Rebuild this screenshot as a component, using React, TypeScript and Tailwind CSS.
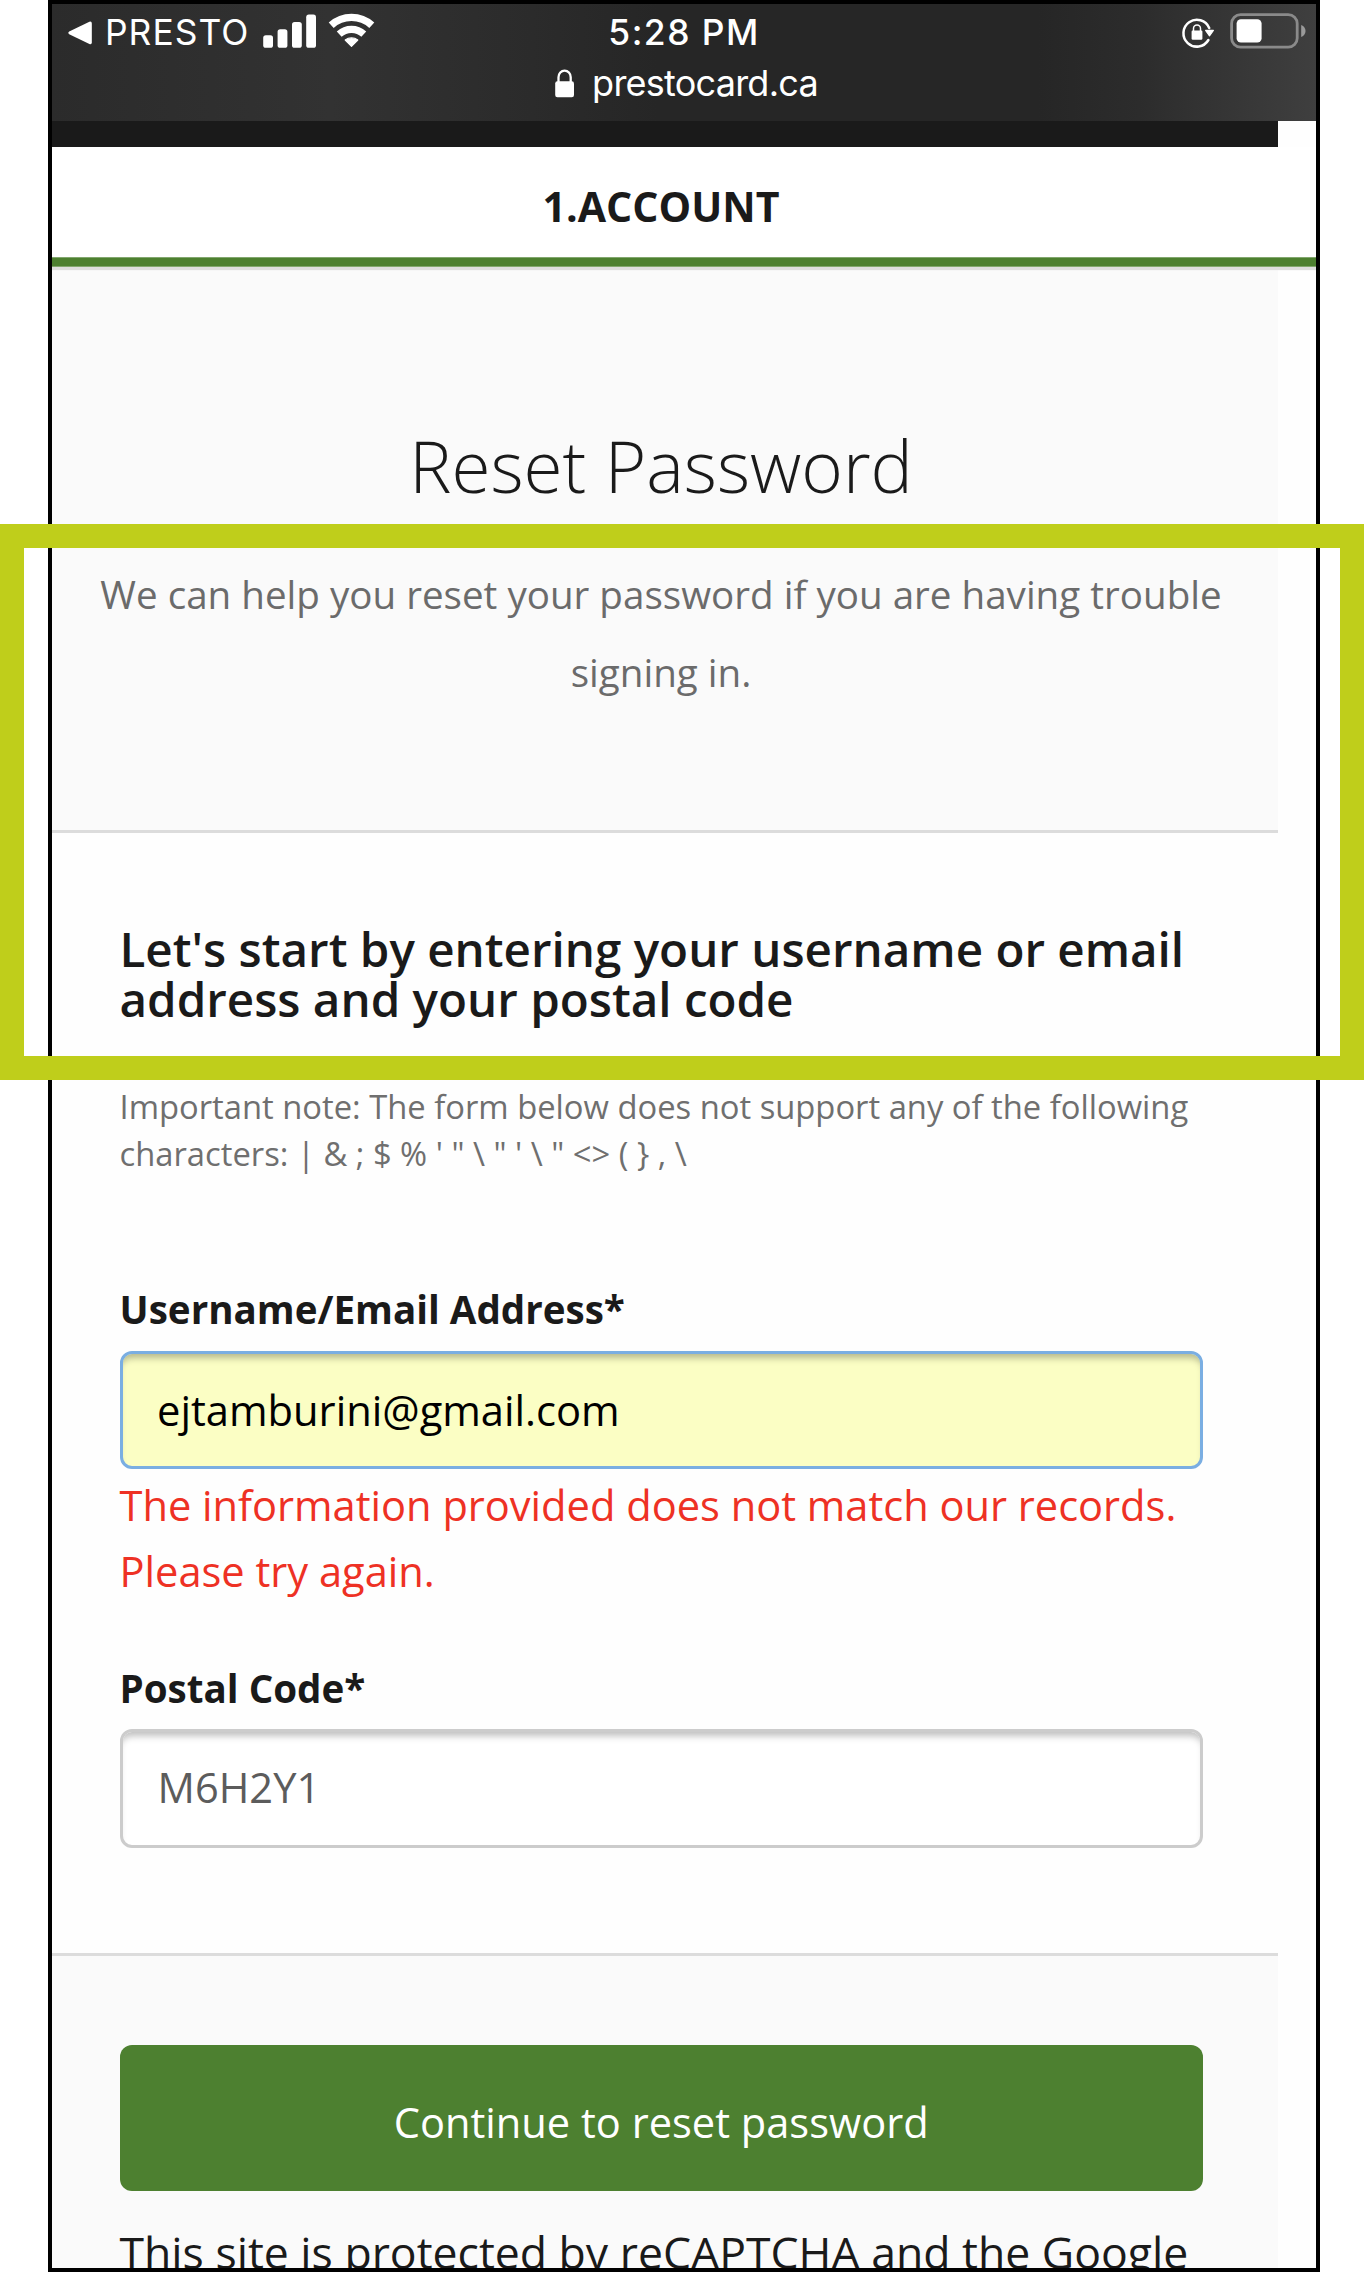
import type { ReactNode } from "react";

function SignalBars() {
  return (
    <svg width="54" height="34" viewBox="0 0 54 34" fill="#fff">
      <rect x="0.2" y="21.3" width="9.8" height="12.5" rx="2.6" />
      <rect x="14.6" y="15.2" width="9.8" height="18.6" rx="2.6" />
      <rect x="29" y="8" width="9.8" height="25.8" rx="2.6" />
      <rect x="43.2" y="0.6" width="9.8" height="33.2" rx="2.6" />
    </svg>
  );
}

function WifiIcon() {
  return (
    <svg width="47" height="35" viewBox="0 0 47 35" fill="none" stroke="#fff">
      <path d="M3.2 12.2 A30.3 30.3 0 0 1 43.8 12.2" strokeWidth="7.4" />
      <path d="M11.2 21.2 A18.3 18.3 0 0 1 35.8 21.2" strokeWidth="7.2" />
      <path d="M17.2 27 A10.6 10.6 0 0 1 29.8 27 L23.5 33.4 Z" fill="#fff" strokeWidth="1.2" strokeLinejoin="round" />
    </svg>
  );
}

function RotationLock() {
  return (
    <svg width="34" height="32" viewBox="0 0 34 32" fill="none">
      <path d="M27.4 23 A13.4 13.4 0 1 1 28.2 11" stroke="#fff" strokeWidth="2.5" strokeLinecap="round" />
      <path d="M24.6 13.4 H32.4 L28.5 18.8 Z" fill="#fff" stroke="#fff" strokeWidth="1.2" strokeLinejoin="round" />
      <rect x="10.6" y="13.6" width="10.8" height="9.2" rx="1.2" fill="#fff" />
      <path d="M12.5 14 V11.6 A3.5 3.5 0 0 1 19.5 11.6 V14" stroke="#fff" strokeWidth="1.5" />
    </svg>
  );
}

function Battery() {
  return (
    <svg width="77" height="36" viewBox="0 0 77 36" fill="none">
      <rect x="1.6" y="1.6" width="65.6" height="32.6" rx="9" stroke="#8a8a8a" strokeWidth="2.8" />
      <rect x="6.6" y="6.2" width="25" height="23.4" rx="4.4" fill="#fff" />
      <path d="M71.2 12 C77 14 77 22 71.2 24 Z" fill="#9a9a9a" />
    </svg>
  );
}

function Padlock() {
  return (
    <svg width="20" height="29" viewBox="0 0 20 29" fill="none">
      <rect x="0.2" y="12.2" width="18.8" height="16" rx="2.2" fill="#fff" />
      <path d="M3.5 13 V8.2 A6.1 6.6 0 0 1 15.7 8.2 V13" stroke="#fff" strokeWidth="2.3" />
    </svg>
  );
}

function BrowserHeader() {
  return (
    <header className="h-[117px] bg-[linear-gradient(90deg,#2b2b2b_0%,#323232_22%,#2b2b2b_38%,#262626_48%,#262626_78%,#2c2c2c_86%,#3f3f3f_100%)] pt-[5px] font-['Inter',sans-serif] text-white">
      <div className="grid h-12 grid-cols-[548px_168px_548px] text-[35.4px] leading-[48px]">
        <div className="flex items-start pl-4">
          <svg className="mt-[11.5px]" width="25" height="24" viewBox="0 0 25 24" fill="#fff">
            <path d="M1.2 10.4 L21.4 0.8 Q23.8 0 23.8 2.4 V21.4 Q23.8 23.8 21.4 22.9 L1.2 13.2 Q-0.6 11.8 1.2 10.4 Z" />
          </svg>
          <span className="ml-[12px] w-[158px] tracking-[1.02px]">PRESTO</span>
          <span className="mt-[4.5px]">
            <SignalBars />
          </span>
          <span className="ml-[10.5px] mt-[4px]">
            <WifiIcon />
          </span>
        </div>
        <div className="flex justify-center font-medium tracking-[1.45px]">
          <span className="whitespace-nowrap">5:28 PM</span>
        </div>
        <div className="flex items-start justify-end pr-[9px]">
          <span className="mr-[15px] mt-[8px]">
            <RotationLock />
          </span>
          <span className="mt-[4px]">
            <Battery />
          </span>
        </div>
      </div>
      <div className="mt-[2px] flex h-12 items-start justify-center pl-[5px] text-[36px] leading-[48px]">
        <span className="mt-[10px]">
          <Padlock />
        </span>
        <span className="ml-[17px] tracking-[-0.76px]">prestocard.ca</span>
      </div>
    </header>
  );
}

function FieldLabel({ children }: { children: ReactNode }) {
  return <div className="text-[38.6px] font-bold leading-[50px]">{children}</div>;
}

export default function App() {
  return (
    <div className="relative h-[2272px] w-[1364px] overflow-hidden bg-white pl-12 font-['Open_Sans',sans-serif] text-[#1a1a1a]">
      <main className="h-[2272px] w-[1272px] overflow-hidden border-4 border-black bg-[#fefefe]">
        <BrowserHeader />
        <div className="h-[26px] w-[1226px] bg-[#1a1a1a]" />
        <div className="h-[110px] bg-white pr-[46px] text-center text-[41.1px] font-bold leading-[119px]">1.ACCOUNT</div>
        <div className="relative h-[10px] border-y border-[#82a76e] bg-[#4d8030] shadow-[0_2px_1px_1px_#dedede]" />

        <section className="h-[565.5px] w-[1226px] border-b-[3px] border-[#dcdcdc] bg-[#fafafa] pr-[8px] pt-[148.5px] text-center">
          <h1 className="text-[71px] font-light leading-[100px]">Reset Password</h1>
          <p className="mt-[40.5px] whitespace-nowrap text-[38.6px] leading-[77.5px] text-[#6b6b6b]">
            We can help you reset your password if you are having trouble
            <br />
            signing in.
          </p>
        </section>

        <section className="h-[1123px] w-[1226px] border-b-[3px] border-[#dcdcdc] pl-[67.5px] pr-[75px] pt-[91px]">
          <h2 className="whitespace-nowrap text-[47.55px] font-semibold leading-[50.6px]">
            Let's start by entering your username or email
            <br />
            address and your postal code
          </h2>
          <p className="mt-[58.3px] whitespace-nowrap text-[32.75px] leading-[47.2px] text-[#6f6f6f]">
            Important note: The form below does not support any of the following
            <br />
            {"characters: | & ; $ % ' \" \\ \" ' \\ \" <> ( } , \\"}
          </p>

          <div className="mt-[106.9px]">
            <FieldLabel>Username/Email Address*</FieldLabel>
            <div className="mt-[17.2px] h-[118px] rounded-[12px] border-[3px] border-[#7aaee2] bg-[#fbfec4] pl-[34.5px] text-[41.7px] leading-[112px] text-black shadow-[inset_0_8px_7px_-4px_rgba(0,0,0,0.28)]">
              ejtamburini@gmail.com
            </div>
            <p className="mt-[2.7px] whitespace-nowrap text-[41.6px] leading-[66px] text-[#ee3124]">
              The information provided does not match our records.
              <br />
              Please try again.
            </p>
          </div>

          <div className="mt-[59px]">
            <FieldLabel>Postal Code*</FieldLabel>
            <div className="mt-[16px] h-[119px] rounded-[12px] border-[3px] border-[#cccccc] bg-white pl-[35px] text-[41.6px] leading-[111px] text-[#5c5c5c] shadow-[inset_0_8px_7px_-4px_rgba(0,0,0,0.25)]">
              M6H2Y1
            </div>
          </div>
        </section>

        <section className="h-[320px] w-[1226px] bg-[#fafafa] pl-[67.5px] pr-[75px] pt-[89.2px]">
          <button className="block h-[146.3px] w-full rounded-[12px] bg-[#4d8030] text-[41.6px] leading-none text-white">
            <span className="block h-[146px] leading-[155px]">Continue to reset password</span>
          </button>
          <p className="mt-[28px] whitespace-nowrap text-[44.55px] leading-[66px]">This site is protected by reCAPTCHA and the Google</p>
        </section>
      </main>

      {/* Highlight frame laid over the phone screen */}
      <div className="absolute left-0 top-[524px] h-[556px] w-[1364px] border-[24px] border-[#bfce1b]" />
    </div>
  );
}
